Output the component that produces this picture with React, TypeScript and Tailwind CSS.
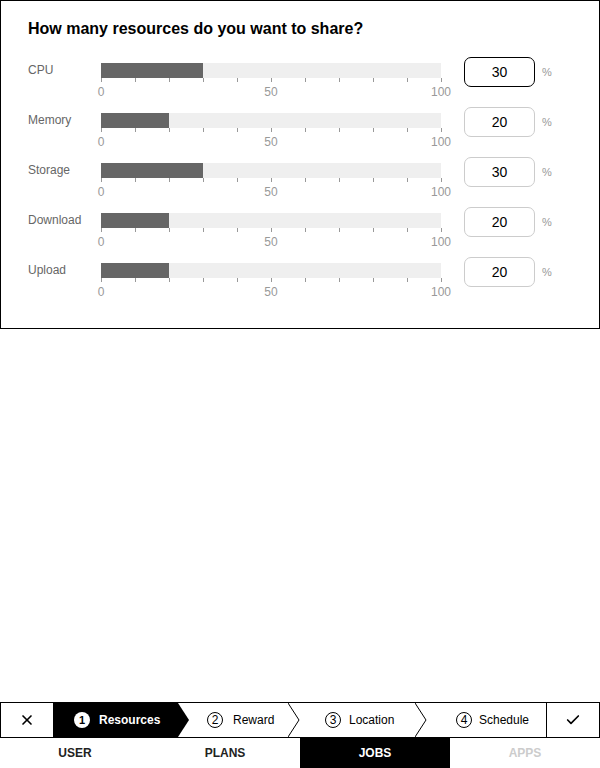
import { X, Check } from "lucide-react";

const resources = [
  { label: "CPU", value: 30, active: true },
  { label: "Memory", value: 20 },
  { label: "Storage", value: 30 },
  { label: "Download", value: 20 },
  { label: "Upload", value: 20 },
];

const ticks = [0, 10, 20, 30, 40, 50, 60, 70, 80, 90, 100];

function Slider({ value }: { value: number }) {
  return (
    <div className="relative w-[340px] pt-[6px]">
      <div className="h-[15px] w-full bg-[#efefef]">
        <div className="h-full bg-[#666666]" style={{ width: `${value}%` }} />
      </div>
      <div className="relative h-[4px] w-full">
        {ticks.map((t) => (
          <span
            key={t}
            className="absolute top-0 h-[4px] w-px bg-[#999]"
            style={{ left: `${t}%` }}
          />
        ))}
      </div>
      <div className="relative mt-[3px] h-[14px] w-full text-[12px] leading-[14px] text-[#999]">
        {[0, 50, 100].map((t) => (
          <span
            key={t}
            className="absolute top-0 -translate-x-1/2"
            style={{ left: `${t}%` }}
          >
            {t}
          </span>
        ))}
      </div>
    </div>
  );
}

function StepNumber({ n, filled }: { n: number; filled?: boolean }) {
  return (
    <span
      className={
        filled
          ? "flex h-[16px] w-[16px] items-center justify-center rounded-full bg-white text-[11px] font-bold text-black"
          : "flex h-[16px] w-[16px] items-center justify-center rounded-full border border-black text-[12px] text-black"
      }
    >
      {n}
    </span>
  );
}

function Chevron() {
  return (
    <svg
      className="absolute left-full top-0 z-10"
      width="12"
      height="34"
      viewBox="0 0 12 34"
    >
      <polyline points="0,0 11,17 0,34" fill="none" stroke="#000" strokeWidth="1" />
    </svg>
  );
}

export default function App() {
  return (
    <div className="flex h-[768px] w-[600px] flex-col bg-white font-['Liberation_Sans',Arial,sans-serif]">
      {/* Resources panel */}
      <div className="h-[329px] border border-black pl-[27px] pt-[18px]">
        <h1 className="text-[16px] font-bold leading-[20px] text-black">
          How many resources do you want to share?
        </h1>
        <div className="mt-[18px] flex flex-col">
          {resources.map((r) => (
            <div key={r.label} className="flex h-[50px] items-start">
              <span className="w-[73px] pt-[6px] text-[12px] leading-[15px] text-[#666]">
                {r.label}
              </span>
              <Slider value={r.value} />
              <div
                className={`ml-[23px] flex h-[30px] w-[71px] items-center justify-center rounded-[7px] border text-[14px] text-black ${
                  r.active ? "border-black" : "border-[#cccccc]"
                }`}
              >
                {r.value}
              </div>
              <span className="ml-[7px] pt-[8px] text-[11px] leading-[14px] text-[#999]">%</span>
            </div>
          ))}
        </div>
      </div>

      <div className="flex-1" />

      {/* Stepper */}
      <div className="flex h-[36px] border border-black text-[12px] text-black">
        <div className="flex w-[52px] items-center justify-center">
          <X size={16} strokeWidth={2.5} />
        </div>
        <div className="relative flex w-[125px] items-center gap-[9px] bg-black pl-[21px] text-white">
          <StepNumber n={1} filled />
          <span className="font-bold">Resources</span>
          <svg
            className="absolute left-full top-0 z-10"
            width="11"
            height="34"
            viewBox="0 0 11 34"
          >
            <polygon points="0,0 11,17 0,34" fill="#000" />
          </svg>
        </div>
        <div className="relative flex w-[110px] items-center gap-[10px] pl-[29px]">
          <StepNumber n={2} />
          <span>Reward</span>
          <Chevron />
        </div>
        <div className="relative flex w-[127px] items-center gap-[8px] pl-[37px]">
          <StepNumber n={3} />
          <span>Location</span>
          <Chevron />
        </div>
        <div className="flex w-[131px] items-center gap-[7px] pl-[41px]">
          <StepNumber n={4} />
          <span>Schedule</span>
        </div>
        <div className="flex flex-1 items-center justify-center border-l border-black">
          <Check size={16} strokeWidth={2.5} />
        </div>
      </div>

      {/* Tabs */}
      <div className="grid h-[30px] grid-cols-4 text-[12px] font-bold">
        <div className="flex items-center justify-center text-[#222]">USER</div>
        <div className="flex items-center justify-center text-[#222]">PLANS</div>
        <div className="flex items-center justify-center bg-black text-white">JOBS</div>
        <div className="flex items-center justify-center text-[#cccccc]">APPS</div>
      </div>
    </div>
  );
}
